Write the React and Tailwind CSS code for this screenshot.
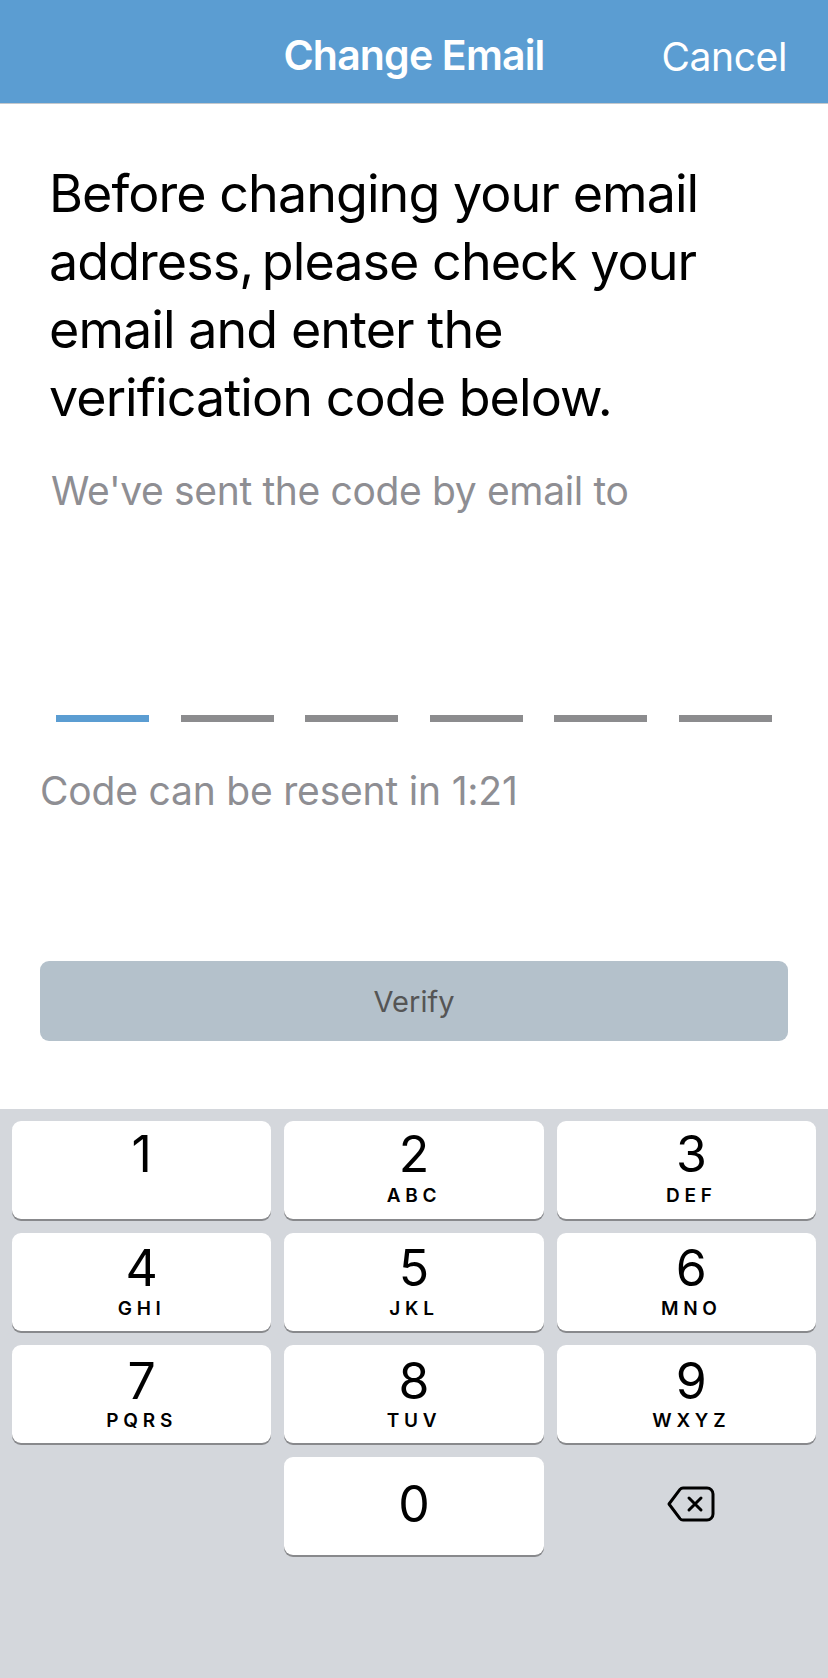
import React from 'react'

const keys = [
  { digit: '1', letters: '', digitClass: 'mt-[3px]', lettersClass: 'mt-0', shift: '' },
  { digit: '2', letters: 'ABC', digitClass: 'mt-[3px]', lettersClass: 'mt-0', shift: '' },
  { digit: '3', letters: 'DEF', digitClass: 'mt-[3px]', lettersClass: 'mt-0', shift: 'pl-[10px]' },
  { digit: '4', letters: 'GHI', digitClass: 'mt-[5px]', lettersClass: '-mt-[1px]', shift: '' },
  { digit: '5', letters: 'JKL', digitClass: 'mt-[5px]', lettersClass: '-mt-[1px]', shift: '' },
  { digit: '6', letters: 'MNO', digitClass: 'mt-[5px]', lettersClass: '-mt-[1px]', shift: 'pl-[10px]' },
  { digit: '7', letters: 'PQRS', digitClass: 'mt-[6px]', lettersClass: '-mt-[2px]', shift: '' },
  { digit: '8', letters: 'TUV', digitClass: 'mt-[6px]', lettersClass: '-mt-[2px]', shift: '' },
  { digit: '9', letters: 'WXYZ', digitClass: 'mt-[6px]', lettersClass: '-mt-[2px]', shift: 'pl-[10px]' },
]

const Key = ({ digit, letters, digitClass, lettersClass, shift }) => (
  <div className={`flex h-[98px] flex-col items-center rounded-[9px] bg-white shadow-[0_2px_0_#88898c] ${shift}`}>
    <span className={`h-[60px] text-[50px] leading-[60px] text-black ${digitClass}`}>{digit}</span>
    <span className={`text-[19px] leading-[24px] font-semibold tracking-[0.25em] text-black ${lettersClass}`}>{letters}</span>
  </div>
)

const BackspaceIcon = () => (
  <svg width="48" height="36" viewBox="0 0 48 36" fill="none" stroke="black" strokeWidth="3" strokeLinecap="round" strokeLinejoin="round">
    <path d="M16 2H40a6 6 0 0 1 6 6v20a6 6 0 0 1-6 6H16a4 4 0 0 1-3-1.4L2 18 13 3.4A4 4 0 0 1 16 2Z" />
    <path d="M22 12l12 12M34 12L22 24" />
  </svg>
)

const App = () => {
  return (
    <div className="flex h-[1678px] w-[828px] flex-col overflow-hidden bg-white font-['Inter',sans-serif]">
      <header className="relative flex h-[104px] shrink-0 items-center justify-center border-b border-[#c4c8cc] bg-[#5b9dd2] pt-[9px] text-white">
        <h1 className="text-[41px] font-semibold tracking-[-0.02em]">Change Email</h1>
        <span className="absolute right-[41px] top-[32px] text-[39px] leading-[50px] tracking-[-0.01em]">Cancel</span>
      </header>

      <main className="flex flex-1 flex-col">
        <p className="mt-[56px] pl-[49px] text-[52px] leading-[68px] tracking-[-0.018em] text-black">
          Before changing your email
          <br />
          address<span className="tracking-[-0.118em]">,</span> please check your
          <br />
          email and enter the
          <br />
          verification code below.
        </p>
        <p className="mt-[35px] pl-[51px] text-[39px] leading-[48px] tracking-[-0.009em] text-[#8e8e93]">We've sent the code by email to</p>

        <div className="mt-[200px] flex justify-between px-[56px]">
          <div className="h-[7px] w-[93px] bg-[#5b9dd2]" />
          <div className="h-[7px] w-[93px] bg-[#8c8c8e]" />
          <div className="h-[7px] w-[93px] bg-[#8c8c8e]" />
          <div className="h-[7px] w-[93px] bg-[#8c8c8e]" />
          <div className="h-[7px] w-[93px] bg-[#8c8c8e]" />
          <div className="h-[7px] w-[93px] bg-[#8c8c8e]" />
        </div>

        <p className="mt-[45px] pl-[40px] text-[39px] leading-[48px] tracking-[-0.005em] text-[#8e8e93]">Code can be resent in 1:21</p>

        <button className="mx-[40px] mt-[146px] flex h-[80px] items-center justify-center rounded-[9px] bg-[#b4c1cb] pt-[2px] text-[29px] text-[#555555]">
          Verify
        </button>
      </main>

      <div className="h-[569px] shrink-0 bg-[#d4d7dc] px-[12px] pt-[12px]">
        <div className="grid grid-cols-3 gap-x-[13px] gap-y-[14px]">
          {keys.map((key) => (
            <Key key={key.digit} {...key} />
          ))}
          <div />
          <div className="flex h-[98px] items-center justify-center rounded-[9px] bg-white shadow-[0_2px_0_#88898c]">
            <span className="-mt-[4px] text-[50px] leading-[60px] text-black">0</span>
          </div>
          <div className="flex items-center justify-center pb-[5px] pl-[10px]">
            <BackspaceIcon />
          </div>
        </div>
      </div>
    </div>
  )
}

export default App
